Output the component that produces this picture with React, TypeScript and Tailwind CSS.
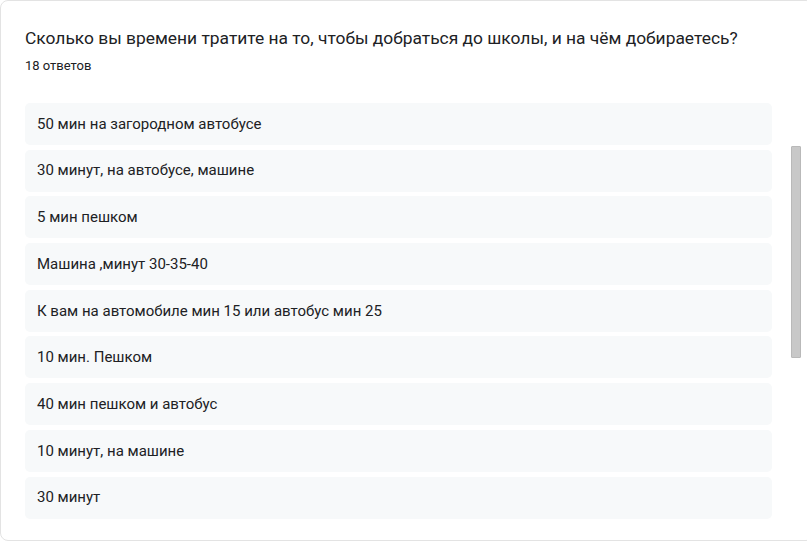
import React from "react";

const answers = [
  "50 мин на загородном автобусе",
  "30 минут, на автобусе, машине",
  "5 мин пешком",
  "Машина ,минут 30-35-40",
  "К вам на автомобиле мин 15 или автобус мин 25",
  "10 мин. Пешком",
  "40 мин пешком и автобус",
  "10 минут, на машине",
  "30 минут",
];

export default function App() {
  return (
    <div
      className="w-[807px] h-[544px] bg-white overflow-hidden"
      style={{ fontFamily: "Roboto, 'Noto Sans', sans-serif" }}
    >
      <div className="relative w-[814px] h-[541px] border border-[#e3e3e3] rounded-[8px] bg-white">
        <div className="pl-[24px] pt-[24px]">
          <h2 className="text-[17.4px] leading-[26px] text-[#202124] font-normal">
            Сколько вы времени тратите на то, чтобы добраться до школы, и на чём добираетесь?
          </h2>
          <div className="mt-[6px] text-[13px] leading-[18px] text-[#202124]">18 ответов</div>
          <div className="mt-[28px] w-[747px] flex flex-col gap-[4.7px]">
            {answers.map((a) => (
              <div
                key={a}
                className="h-[42px] rounded-[5px] bg-[#f7f9fa] flex items-center pl-[12px] text-[15px] text-[#202124]"
              >
                {a}
              </div>
            ))}
          </div>
        </div>
        {/* scrollbar thumb */}
        <div className="absolute left-[790px] top-[145px] w-[10px] h-[212px] bg-[#c8c8c8] border border-[#b9b9b9] rounded-[1px]" />
      </div>
    </div>
  );
}
